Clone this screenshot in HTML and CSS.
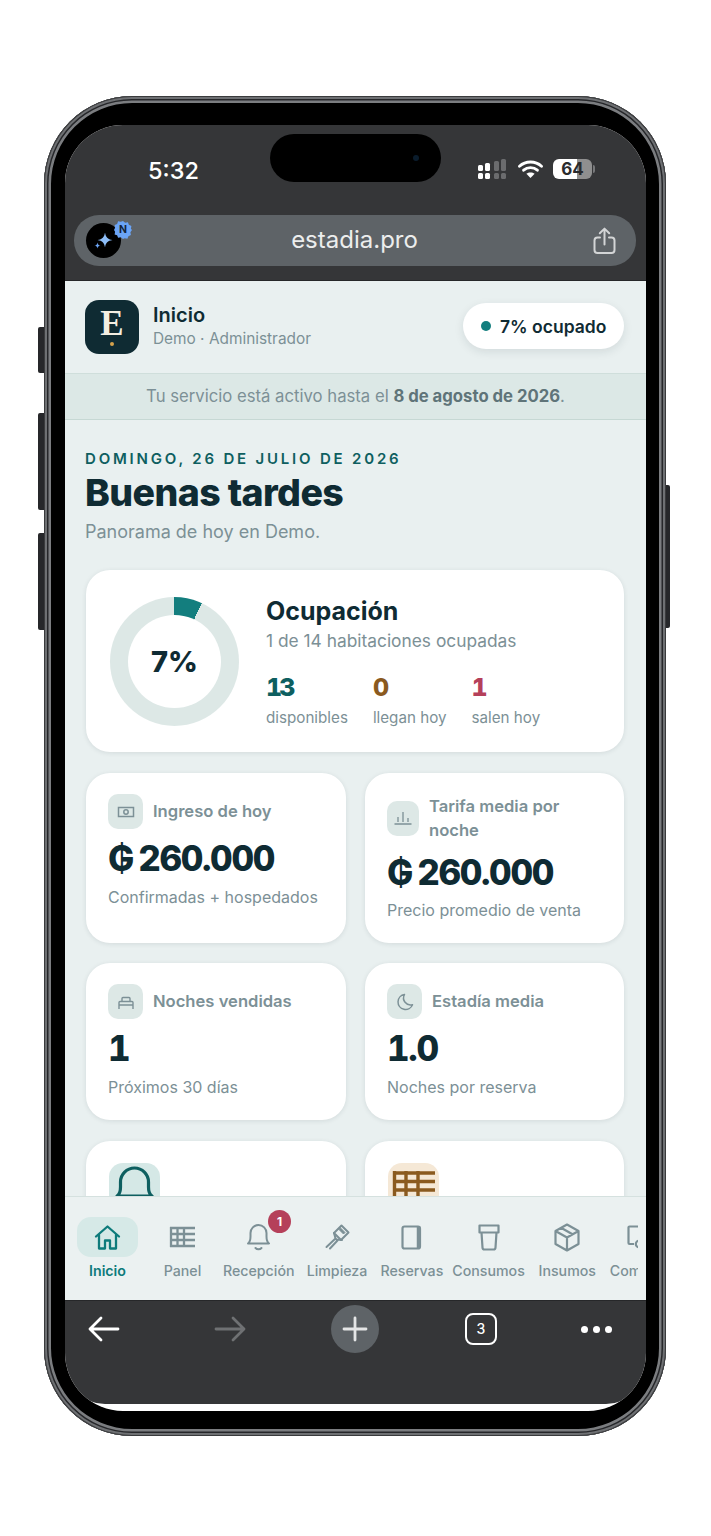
FILE: index.html
```html
<!DOCTYPE html>
<html lang="es">
<head>
    <meta charset="UTF-8">
    <meta name="viewport" content="width=device-width, initial-scale=1.0">
    <title>Estadia - Inicio</title>
    <link rel="stylesheet" href="styles.css">
</head>
<body>

<div class="phone">
    <span class="side-btn btn-mute"></span>
    <span class="side-btn btn-up"></span>
    <span class="side-btn btn-down"></span>
    <span class="side-btn btn-power"></span>

    <div class="screen">
        <div class="chrome-top">
            <div class="status">
                <div class="time">5:32</div>
                <div class="island"><span class="camera"></span></div>
                <div class="status-icons">
                    <svg class="signal" width="29" height="20" viewBox="0 0 29 20">
                        <g fill="#fff">
                            <rect x="0" y="14" width="5" height="6" rx="1.5"/>
                            <rect x="7" y="14" width="5" height="6" rx="1.5"/>
                            <rect x="0" y="6" width="5" height="6" rx="1.5"/>
                            <rect x="7" y="4" width="5" height="8" rx="1.5"/>
                        </g>
                        <g fill="#6b6c6e">
                            <rect x="16" y="14" width="5" height="6" rx="1.5"/>
                            <rect x="23" y="14" width="5" height="6" rx="1.5"/>
                            <rect x="16" y="2" width="5" height="10" rx="1.5"/>
                            <rect x="23" y="0" width="5" height="12" rx="1.5"/>
                        </g>
                    </svg>
                    <svg class="wifi" width="25" height="18" viewBox="0 0 25 18">
                        <path d="M1.5 6.2C7.6 .6 17.4 .6 23.5 6.2" fill="none" stroke="#fff" stroke-width="2.9" stroke-linecap="round"/>
                        <path d="M5.6 10.2c3.9-3.4 9.9-3.4 13.8 0" fill="none" stroke="#fff" stroke-width="2.9" stroke-linecap="round"/>
                        <path d="M12.5 18l-4.1-4.2c2.3-1.9 5.9-1.9 8.2 0z" fill="#fff"/>
                    </svg>
                    <div class="battery">64</div>
                </div>
            </div>
            <div class="urlbar">
                <div class="assistant">
                    <svg width="35" height="35" viewBox="0 0 35 35">
                        <path d="M19 9.5c.9 5 2.5 6.700 7.500 7.600-5 .9-6.600 2.500-7.500 7.500-.9-5-2.500-6.600-7.500-7.500 5-.9 6.600-2.600 7.500-7.600z" fill="#8dbdf7"/>
                        <path d="M11.500 19.500c.4 2 1 2.700 3 3-2 .4-2.600 1-3 3-.4-2-1-2.600-3-3 2-.3 2.600-1 3-3z" fill="#6ba4f5"/>
                    </svg>
                    <span class="assistant-badge">
                        <svg width="18" height="18" viewBox="0 0 18 18">
                            <path d="M9 0l2.200 1.700 2.700-.5 1 2.600 2.500 1.200-.5 2.700L18 9l-1.600 2.300.5 2.700-2.500 1.200-1 2.600-2.700-.5L9 18l-2.200-1.700-2.700.5-1-2.600L.6 13.500l.5-2.700L0 9l1.100-2.200-.5-2.700 2.500-1.200 1-2.600 2.700.5z" fill="#6ba4f5"/>
                        </svg>
                        <b>N</b>
                    </span>
                </div>
                <div class="url">estadia.pro</div>
                <svg class="share" width="23" height="28" viewBox="0 0 23 28" fill="none" stroke="#d3d5d6" stroke-width="2" stroke-linecap="round" stroke-linejoin="round">
                    <path d="M7 10.500H4.500a3 3 0 0 0-3 3V23a3 3 0 0 0 3 3h14a3 3 0 0 0 3-3v-9.500a3 3 0 0 0-3-3H16"/>
                    <path d="M11.500 17.500V1.800M6.800 6.200l4.700-4.600 4.700 4.600"/>
                </svg>
            </div>
        </div>

        <div class="app">
            <header class="app-header">
                <div class="logo">
                    <span class="logo-e">E</span>
                    <span class="logo-dot"></span>
                </div>
                <div class="app-title">
                    <div class="app-name">Inicio</div>
                    <div class="app-role">Demo · Administrador</div>
                </div>
                <div class="pill"><span class="pill-dot"></span>7% ocupado</div>
            </header>
            <div class="banner">Tu servicio está activo hasta el <b>8 de agosto de 2026</b>.</div>

            <main class="main">
                <div class="date">DOMINGO, 26 DE JULIO DE 2026</div>
                <h1>Buenas tardes</h1>
                <p class="lead">Panorama de hoy en Demo.</p>

                <section class="card occ">
                    <div class="donut"><div class="donut-hole">7%</div></div>
                    <div class="occ-info">
                        <h2>Ocupación</h2>
                        <div class="occ-sub">1 de 14 habitaciones ocupadas</div>
                        <div class="stats">
                            <div><div class="stat-num teal">13</div><div class="stat-label">disponibles</div></div>
                            <div><div class="stat-num brown">0</div><div class="stat-label">llegan hoy</div></div>
                            <div><div class="stat-num red">1</div><div class="stat-label">salen hoy</div></div>
                        </div>
                    </div>
                </section>

                <div class="grid">
                    <section class="card kpi">
                        <div class="kpi-head">
                            <span class="kpi-icon">
                                <svg width="20" height="20" viewBox="0 0 20 20" fill="none" stroke="#7c9096" stroke-width="1.500">
                                    <rect x="2.500" y="5.500" width="15" height="9"/>
                                    <circle cx="10" cy="10" r="2.200"/>
                                </svg>
                            </span>
                            <span class="kpi-label">Ingreso de hoy</span>
                        </div>
                        <div class="kpi-value">₲ 260.000</div>
                        <div class="kpi-note">Confirmadas + hospedados</div>
                    </section>
                    <section class="card kpi">
                        <div class="kpi-head kpi-head-wrap">
                            <span class="kpi-icon kpi-icon-narrow">
                                <svg width="20" height="20" viewBox="0 0 20 20" fill="none" stroke="#7c9096" stroke-width="1.300">
                                    <path d="M1.500 16h17M5 14v-5M10 14V4M15 14v-4"/>
                                </svg>
                            </span>
                            <span class="kpi-label">Tarifa media por noche</span>
                        </div>
                        <div class="kpi-value">₲ 260.000</div>
                        <div class="kpi-note">Precio promedio de venta</div>
                    </section>
                    <section class="card kpi">
                        <div class="kpi-head">
                            <span class="kpi-icon">
                                <svg width="20" height="20" viewBox="0 0 20 20" fill="none" stroke="#7c9096" stroke-width="1.400">
                                    <path d="M3 17V10.500a1 1 0 0 1 1-1h12a1 1 0 0 1 1 1V17M3 13h14M6 9.500V6.500a1 1 0 0 1 1-1h6a1 1 0 0 1 1 1v3"/>
                                </svg>
                            </span>
                            <span class="kpi-label">Noches vendidas</span>
                        </div>
                        <div class="kpi-value">1</div>
                        <div class="kpi-note">Próximos 30 días</div>
                    </section>
                    <section class="card kpi">
                        <div class="kpi-head">
                            <span class="kpi-icon">
                                <svg width="20" height="20" viewBox="0 0 20 20" fill="none" stroke="#7c9096" stroke-width="1.500" stroke-linejoin="round">
                                    <path d="M9.500 2.500a7.500 7.500 0 1 0 8 10.200A7 7 0 0 1 9.500 2.500z"/>
                                </svg>
                            </span>
                            <span class="kpi-label">Estadía media</span>
                        </div>
                        <div class="kpi-value">1.0</div>
                        <div class="kpi-note">Noches por reserva</div>
                    </section>
                    <section class="card kpi kpi-big">
                        <span class="big-icon big-teal">
                            <svg width="51" height="51" viewBox="0 0 51 51" fill="none" stroke="#0e5f60" stroke-width="3.200" stroke-linejoin="round">
                                <path d="M8 33c3-2 3.500-5.500 3.500-9v-5a14 14 0 0 1 28 0v5c0 3.500 .5 7 3.500 9z"/>
                            </svg>
                        </span>
                    </section>
                    <section class="card kpi kpi-big">
                        <span class="big-icon big-brown">
                            <svg width="51" height="51" viewBox="0 0 51 51" fill="none" stroke="#8a5a1f" stroke-width="3.400">
                                <path d="M5 10h42M5 18.500h42M5 27h42M5 35.500h42M6.500 8v32M18 8v32M30 8v32"/>
                            </svg>
                        </span>
                    </section>
                </div>
            </main>

            <nav class="tabs">
                <div class="tab-strip">
                    <div class="tab active">
                        <span class="tab-icon">
                            <svg width="27" height="27" viewBox="0 0 27 27" fill="none" stroke="#0e7b7b" stroke-width="2.300" stroke-linejoin="round" stroke-linecap="round">
                                <path d="M2 12.500L13.500 2.500 25 12.500M5 10.500V24.500h6V16.500h5v8h6V10.500"/>
                            </svg>
                        </span>
                        Inicio
                    </div>
                    <div class="tab tab-panel">
                        <span class="tab-icon">
                            <svg width="27" height="22" viewBox="0 0 27 22" fill="none" stroke="#7c9096" stroke-width="2.300">
                                <path d="M1 2h25M1 8h25M1 14h25M1 20h25M2 1v20M8.500 1v20M15 1v20"/>
                            </svg>
                        </span>
                        Panel
                    </div>
                    <div class="tab">
                        <span class="tab-icon">
                            <svg width="25" height="28" viewBox="0 0 25 28" fill="none" stroke="#7c9096" stroke-width="2" stroke-linecap="round" stroke-linejoin="round">
                                <path d="M2 20.500c2-1.500 2.500-3.500 2.500-7V10a8 8 0 0 1 16 0v3.500c0 3.500.5 5.500 2.500 7z"/>
                                <path d="M9.500 25c1.500 1.600 4.500 1.600 6 0"/>
                            </svg>
                        </span>
                        <span class="tab-badge">1</span>
                        Recepción
                    </div>
                    <div class="tab">
                        <span class="tab-icon">
                            <svg width="25" height="26" viewBox="0 0 25 26" fill="none" stroke="#7c9096" stroke-width="2" stroke-linecap="round" stroke-linejoin="round">
                                <path d="M16.500 1.500l7 7-7.500 7.500-7-7z"/>
                                <path d="M15.500 4l4.500 4.500-1.500 1.500L14 5.500z" fill="#7c9096" stroke-width="1"/>
                                <path d="M9 9l1.500 5.500 1 1 5.500 .5M10.500 14.500L1.500 23M12.500 16.500L5 24.500"/>
                            </svg>
                        </span>
                        Limpieza
                    </div>
                    <div class="tab tab-reservas">
                        <span class="tab-icon">
                            <svg width="21" height="25" viewBox="0 0 21 25" fill="none" stroke="#7c9096" stroke-width="2.200" stroke-linejoin="round">
                                <rect x="1.500" y="1.500" width="17.500" height="22" rx="2"/>
                                <path d="M17.500 1.500v22" stroke-width="3.500"/>
                            </svg>
                        </span>
                        Reservas
                    </div>
                    <div class="tab">
                        <span class="tab-icon">
                            <svg width="22" height="27" viewBox="0 0 22 27" fill="none" stroke="#7c9096" stroke-width="2.200" stroke-linejoin="round">
                                <path d="M1.500 1.500h19v7h-19zM3.500 8.500l1 15a2 2 0 0 0 2 2h9a2 2 0 0 0 2-2l1-15"/>
                            </svg>
                        </span>
                        Consumos
                    </div>
                    <div class="tab">
                        <span class="tab-icon">
                            <svg width="28" height="29" viewBox="0 0 28 29" fill="none" stroke="#7c9096" stroke-width="2.200" stroke-linejoin="round">
                                <path d="M14 1.500l11.500 6.500v13L14 27.500 2.500 21V8zM2.500 8L14 14.500 25.500 8M14 14.500v13M8 4.800l11.500 6.500"/>
                            </svg>
                        </span>
                        Insumos
                    </div>
                    <div class="tab tab-last">
                        <span class="tab-icon tab-icon-left">
                            <svg width="16" height="25" viewBox="0 0 16 25" fill="none" stroke="#7c9096" stroke-width="2.200">
                                <path d="M12 1.500H2.500a1 1 0 0 0-1 1V18a1 1 0 0 0 1 1H7"/>
                                <circle cx="12" cy="19" r="3.200"/>
                            </svg>
                        </span>
                        Compras
                    </div>
                </div>
            </nav>
        </div>

        <div class="chrome-bottom">
            <svg class="arrow" width="32" height="26" viewBox="0 0 32 26" fill="none" stroke="#fff" stroke-width="2.800" stroke-linecap="round" stroke-linejoin="round">
                <path d="M30 13H2M13 2L2 13l11 11"/>
            </svg>
            <svg class="arrow arrow-next" width="32" height="26" viewBox="0 0 32 26" fill="none" stroke="#6f7173" stroke-width="2.800" stroke-linecap="round" stroke-linejoin="round">
                <path d="M2 13h28M19 2l11 11-11 11"/>
            </svg>
            <div class="plus">
                <svg width="26" height="26" viewBox="0 0 26 26" stroke="#e4e5e6" stroke-width="2.800" stroke-linecap="round">
                    <path d="M13 2v22M2 13h22"/>
                </svg>
            </div>
            <div class="tab-count">3</div>
            <div class="more"><span></span><span></span><span></span></div>
        </div>
    </div>
</div>

</body>
</html>
```
FILE: styles.css
```css
* {
    box-sizing: border-box;
}
body {
    margin: 0;
    background-color: #fff;
    font-family: Inter, "Noto Sans", sans-serif;
    color: #0f2b33;
    height: 1536px;
    overflow: hidden;
}

/* phone frame */
.phone {
    position: relative;
    width: 622px;
    height: 1340px;
    margin: 96px 0 0 44px;
    padding: 29px 20px 25px 21px;
    background-color: #000;
    border-radius: 88px;
    box-shadow: inset 0 0 0 1px #3a3b3d, inset 0 0 0 3px #6e7073, inset 0 0 0 4.5px #26272a, inset 0 0 0 7px #7b7d80;
}
.side-btn {
    position: absolute;
    width: 6px;
    background-color: #26272a;
    border-radius: 2px 0 0 2px;
}
.btn-mute { left: -6px; top: 231px; height: 46px; }
.btn-up { left: -6px; top: 317px; height: 97px; }
.btn-down { left: -6px; top: 437px; height: 97px; }
.btn-power { right: -4px; top: 389px; width: 4px; height: 143px; border-radius: 0 2px 2px 0; }

.screen {
    display: flex;
    flex-direction: column;
    height: 1286px;
    background-color: #fff;
    border-radius: 58px;
    overflow: hidden;
}

/* browser top */
.chrome-top {
    height: 156px;
    background-color: #353638;
    border-bottom: 1px solid #262729;
    flex-shrink: 0;
}
.status {
    display: grid;
    grid-template-columns: 205px 171px 1fr;
    height: 90px;
    padding-top: 9px;
}
.time {
    margin-top: 22px;
    padding-left: 83px;
    font-size: 23.5px;
    line-height: 30px;
    font-weight: 500;
    color: #fff;
}
.island {
    display: flex;
    justify-content: flex-end;
    align-items: center;
    height: 48px;
    padding-right: 22px;
    background-color: #000;
    border-radius: 24px;
}
.camera {
    width: 6px;
    height: 6px;
    border-radius: 50%;
    background-color: #0a1c2c;
}
.status-icons {
    display: flex;
    align-items: center;
    height: 21px;
    margin-top: 24px;
    padding-left: 37px;
}
.wifi {
    margin-left: 11px;
}
.battery {
    position: relative;
    width: 39px;
    height: 20px;
    margin-left: 10px;
    border-radius: 6px;
    background: linear-gradient(to right, #fff 62%, #8f8f8f 62%);
    color: #2a2b2d;
    font-size: 17px;
    font-weight: 700;
    line-height: 20px;
    text-align: center;
}
.battery::after {
    content: "";
    position: absolute;
    right: -3px;
    top: 6px;
    width: 2px;
    height: 8px;
    background-color: #77787a;
    border-radius: 0 2px 2px 0;
}
.urlbar {
    position: relative;
    display: flex;
    align-items: center;
    height: 51px;
    margin: 0 10px 0 9px;
    padding: 0 20px 0 12px;
    background-color: #5e6367;
    border-radius: 25px;
}
.assistant {
    position: relative;
    width: 35px;
    height: 35px;
    border-radius: 50%;
    background-color: #000;
    flex-shrink: 0;
}
.assistant-badge {
    position: absolute;
    left: 28px;
    top: -2px;
    width: 18px;
    height: 18px;
}
.assistant-badge b {
    position: absolute;
    left: 0;
    top: 0;
    width: 18px;
    font-size: 10.5px;
    line-height: 18px;
    text-align: center;
    color: #12233a;
}
.url {
    flex: 1;
    margin-bottom: 3px;
    padding-right: 5px;
    font-size: 24px;
    color: #eceded;
    text-align: center;
}
.share {
    margin-top: 1px;
    flex-shrink: 0;
}

/* app */
.app {
    display: flex;
    flex-direction: column;
    height: 1019px;
    background-color: #e9f0f0;
    flex-shrink: 0;
}
.app-header {
    display: flex;
    align-items: center;
    height: 92px;
    padding: 0 22px 0 20px;
    flex-shrink: 0;
}
.logo {
    display: flex;
    flex-direction: column;
    align-items: center;
    width: 54px;
    height: 54px;
    padding-top: 7px;
    background-color: #0f2b33;
    border-radius: 14px;
}
.logo-e {
    font-family: "Liberation Serif", serif;
    font-size: 35px;
    font-weight: 700;
    line-height: 34px;
    color: #f3eee2;
}
.logo-dot {
    width: 4px;
    height: 4px;
    margin-top: 1px;
    border-radius: 50%;
    background-color: #d6a24c;
}
.app-title {
    flex: 1;
    margin: 0 0 4px 14px;
}
.app-name {
    font-size: 20px;
    line-height: 26px;
    font-weight: 600;
}
.app-role {
    margin-top: 1px;
    font-size: 15.4px;
    line-height: 20px;
    color: #7c9096;
}
.pill {
    display: flex;
    align-items: center;
    width: 161px;
    height: 46px;
    margin-bottom: 2px;
    padding-left: 18px;
    background-color: #fff;
    border-radius: 23px;
    box-shadow: 0 3px 10px rgba(15, 43, 51, 0.1);
    font-size: 17.5px;
    font-weight: 600;
}
.pill-dot {
    width: 10px;
    height: 10px;
    margin-right: 9px;
    border-radius: 50%;
    background-color: #137e7e;
}
.banner {
    height: 47px;
    background-color: #dce8e6;
    border-top: 1px solid #cfdedb;
    border-bottom: 1px solid #c6d8d4;
    font-size: 16.7px;
    line-height: 44px;
    text-align: center;
    color: #7c9096;
    flex-shrink: 0;
}
.banner b {
    font-weight: 700;
    color: #5f7479;
}

.main {
    flex: 1;
    min-height: 0;
    padding: 30px 22px 0 20px;
    overflow: hidden;
}
.date {
    font-size: 15px;
    line-height: 18px;
    font-weight: 600;
    letter-spacing: 2.8px;
    color: #0e5f60;
}
h1 {
    margin: 3px 0 0;
    font-size: 37.5px;
    line-height: 44px;
    font-weight: 800;
    letter-spacing: -0.6px;
}
.lead {
    margin: 6px 0 0;
    font-size: 18px;
    line-height: 22px;
    color: #7c9096;
}

.card {
    background-color: #fff;
    border-radius: 24px;
    box-shadow: 0 1px 5px rgba(15, 43, 51, 0.1);
}
.occ {
    display: flex;
    align-items: center;
    height: 182px;
    margin: 27px 0 21px 1px;
    padding-left: 24px;
}
.donut {
    display: flex;
    align-items: center;
    justify-content: center;
    width: 129px;
    height: 129px;
    border-radius: 50%;
    background: conic-gradient(#137e7e 0 25deg, #dde8e6 25deg 360deg);
    flex-shrink: 0;
}
.donut-hole {
    width: 93px;
    height: 93px;
    border-radius: 50%;
    background-color: #fff;
    font-size: 29px;
    line-height: 93px;
    font-weight: 800;
    text-align: center;
}
.occ-info {
    margin: 3px 0 0 27px;
}
h2 {
    margin: 0;
    font-size: 25px;
    line-height: 30px;
    font-weight: 700;
}
.occ-sub {
    margin-top: 4px;
    font-size: 17.35px;
    line-height: 22px;
    color: #7c9096;
}
.stats {
    display: flex;
    gap: 25px;
    margin-top: 20px;
}
.stat-num {
    font-size: 25px;
    line-height: 30px;
    font-weight: 800;
    letter-spacing: -3px;
    font-feature-settings: "tnum";
}
.stat-label {
    margin-top: 5px;
    font-size: 15.2px;
    line-height: 22px;
    color: #7c9096;
}
.teal { color: #0e5f60; }
.brown { color: #8a5a1f; }
.red { color: #b5405a; }

.grid {
    display: grid;
    grid-template-columns: 260px 259px;
    gap: 20px 19px;
    margin-left: 1px;
}
.kpi {
    padding: 21px 22px 22px;
}
.kpi-big {
    margin-top: 1px;
}
.kpi-head {
    display: flex;
    align-items: center;
    gap: 10px;
}
.kpi-icon {
    display: flex;
    align-items: center;
    justify-content: center;
    width: 35px;
    height: 35px;
    border-radius: 10px;
    background-color: #dde8e6;
    flex-shrink: 0;
}
.kpi-icon-narrow {
    width: 32px;
}
.kpi-label {
    padding-bottom: 2px;
    font-size: 16.6px;
    line-height: 24px;
    font-weight: 600;
    color: #7c9096;
}
.kpi-head-wrap .kpi-label {
    padding-bottom: 0;
}
.kpi-value {
    margin-top: 9px;
    font-size: 35px;
    line-height: 40px;
    font-weight: 800;
    letter-spacing: -1.3px;
    word-spacing: -3px;
    font-feature-settings: "tnum";
}
.kpi-head-wrap + .kpi-value {
    margin-top: 10px;
}
.kpi-head-wrap ~ .kpi-note {
    margin-top: 7px;
}
.kpi-note {
    margin-top: 8px;
    font-size: 16px;
    line-height: 22px;
    color: #7c9096;
}
.big-icon {
    display: block;
    width: 51px;
    height: 51px;
    margin: 1px 0 0 1px;
    border-radius: 14px;
}
.big-teal { background-color: #d5e8e6; }
.big-brown { background-color: #f5e8d6; }

/* bottom tabs */
.tabs {
    height: 104px;
    padding: 8px 8px 0 12px;
    background-color: #ebf1f1;
    border-top: 1px solid #d5e1df;
    flex-shrink: 0;
}
.tab-strip {
    display: flex;
    gap: 12px;
    padding-top: 12px;
    overflow: hidden;
}
.tab {
    position: relative;
    display: flex;
    flex-direction: column;
    align-items: center;
    min-width: 61px;
    font-size: 14.2px;
    line-height: 20px;
    font-weight: 500;
    color: #7c9096;
    white-space: nowrap;
    flex-shrink: 0;
}
.tab-panel {
    margin: 0 -2px 0 2px;
}
.tab-reservas {
    margin: 0 -3px 0 1px;
}
.tab-icon {
    display: flex;
    align-items: center;
    justify-content: center;
    width: 61px;
    height: 40px;
    margin-bottom: 4px;
    border-radius: 14px;
}
.tab-icon-left {
    justify-content: flex-start;
    padding-left: 17px;
}
.tab.active {
    color: #0e7b7b;
    font-weight: 600;
}
.tab.active .tab-icon {
    background-color: #d6e9e7;
}
.tab-badge {
    position: absolute;
    left: 45px;
    top: -7px;
    width: 23px;
    height: 23px;
    border-radius: 50%;
    background-color: #b5405a;
    color: #fff;
    font-size: 12px;
    line-height: 23px;
    font-weight: 700;
    text-align: center;
}

/* browser bottom */
.chrome-bottom {
    display: flex;
    align-items: flex-start;
    height: 104px;
    padding: 4px 0 0 23px;
    background-color: #353638;
    border-top: 1px solid #262729;
    border-radius: 0 0 40px 40px;
    flex-shrink: 0;
}
.arrow {
    margin-top: 11px;
}
.arrow-next {
    margin-left: 94px;
}
.plus {
    display: flex;
    align-items: center;
    justify-content: center;
    width: 48px;
    height: 48px;
    margin-left: 85px;
    border-radius: 50%;
    background-color: #5e6367;
}
.tab-count {
    width: 32px;
    height: 32px;
    margin: 8px 0 0 86px;
    border: 2.5px solid #fff;
    border-radius: 8px;
    color: #fff;
    font-size: 14px;
    line-height: 27px;
    font-weight: 500;
    text-align: center;
}
.more {
    display: flex;
    gap: 5px;
    margin: 21px 0 0 84px;
}
.more span {
    width: 7px;
    height: 7px;
    border-radius: 50%;
    background-color: #fff;
}
```
